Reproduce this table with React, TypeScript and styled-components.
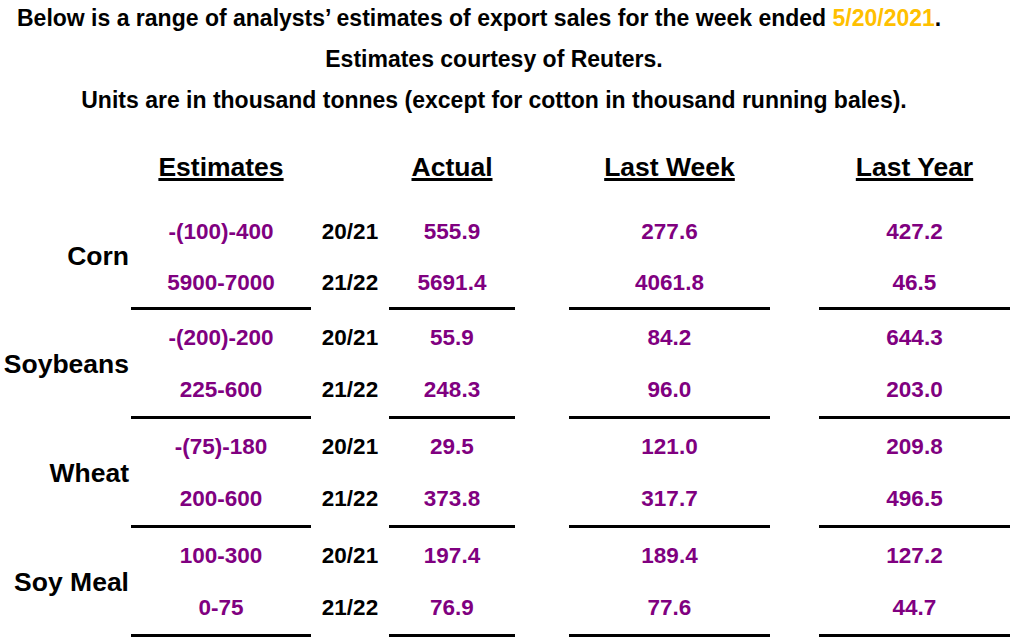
import React from "react";
import styled, { createGlobalStyle } from "styled-components";

const GlobalStyle = createGlobalStyle`
  html, body {
    margin: 0;
    padding: 0;
    background: #ffffff;
  }
  body {
    font-family: "Liberation Sans", Arial, sans-serif;
    font-weight: 700;
    color: #000000;
  }
`;

const COLS = "131px 180px 78px 126px 54px 201px 49px 191px";

type Group = {
  name: string;
  rows: { est: string; year: string; actual: string; week: string; year2: string }[];
};

const groups: Group[] = [
  {
    name: "Corn",
    rows: [
      { est: "-(100)-400", year: "20/21", actual: "555.9", week: "277.6", year2: "427.2" },
      { est: "5900-7000", year: "21/22", actual: "5691.4", week: "4061.8", year2: "46.5" },
    ],
  },
  {
    name: "Soybeans",
    rows: [
      { est: "-(200)-200", year: "20/21", actual: "55.9", week: "84.2", year2: "644.3" },
      { est: "225-600", year: "21/22", actual: "248.3", week: "96.0", year2: "203.0" },
    ],
  },
  {
    name: "Wheat",
    rows: [
      { est: "-(75)-180", year: "20/21", actual: "29.5", week: "121.0", year2: "209.8" },
      { est: "200-600", year: "21/22", actual: "373.8", week: "317.7", year2: "496.5" },
    ],
  },
  {
    name: "Soy Meal",
    rows: [
      { est: "100-300", year: "20/21", actual: "197.4", week: "189.4", year2: "127.2" },
      { est: "0-75", year: "21/22", actual: "76.9", week: "77.6", year2: "44.7" },
    ],
  },
];

const Page = styled.div`
  width: 1019px;
  height: 639px;
  overflow: hidden;
`;

const Intro = styled.div`
  width: 988px;
  margin-top: -2px;
  font-size: 23px;
`;

const IntroLine = styled.div<{ $left?: boolean }>`
  height: 40px;
  line-height: 40px;
  white-space: nowrap;
  text-align: ${(p) => (p.$left ? "left" : "center")};
  padding-left: ${(p) => (p.$left ? "17px" : "0")};

  & + & {
    margin-top: 1px;
  }
`;

const DateText = styled.span`
  color: #ffc000;
`;

const HeaderRow = styled.div`
  display: grid;
  grid-template-columns: ${COLS};
  height: 40px;
  margin-top: 27px;
  margin-bottom: 14px;
  align-items: center;
`;

const Heading = styled.div<{ $col: number }>`
  grid-column: ${(p) => p.$col};
  text-align: center;
  font-size: 26.5px;
  line-height: 40px;
  white-space: nowrap;

  span {
    text-decoration: underline;
    text-decoration-thickness: 3px;
    text-underline-offset: 2px;
  }
`;

const GroupGrid = styled.div<{ $first?: boolean }>`
  display: grid;
  grid-template-columns: ${COLS};
  grid-template-rows: ${(p) => (p.$first ? "52px 49px 3px" : "52px 52px 3px")};
  padding-top: ${(p) => (p.$first ? "5px" : "2px")};
`;

const Name = styled.div`
  grid-column: 1;
  grid-row: 1 / span 2;
  align-self: center;
  text-align: right;
  padding-right: 2px;
  font-size: 26.5px;
  white-space: nowrap;
`;

const Cell = styled.div<{ $col: number; $row: number; $dark?: boolean }>`
  grid-column: ${(p) => p.$col};
  grid-row: ${(p) => p.$row};
  display: flex;
  align-items: center;
  justify-content: center;
  font-size: 22.5px;
  white-space: nowrap;
  color: ${(p) => (p.$dark ? "#000000" : "#800080")};
`;

const Rule = styled.div<{ $col: number }>`
  grid-column: ${(p) => p.$col};
  grid-row: 3;
  background: #000000;
`;

const App: React.FC = () => {
  return (
    <Page>
      <GlobalStyle />
      <Intro>
        <IntroLine $left>
          Below is a range of analysts’ estimates of export sales for the week ended{" "}
          <DateText>5/20/2021</DateText>.
        </IntroLine>
        <IntroLine>Estimates courtesy of Reuters.</IntroLine>
        <IntroLine>
          Units are in thousand tonnes (except for cotton in thousand running bales).
        </IntroLine>
      </Intro>

      <HeaderRow>
        <Heading $col={2}>
          <span>Estimates</span>
        </Heading>
        <Heading $col={4}>
          <span>Actual</span>
        </Heading>
        <Heading $col={6}>
          <span>Last Week</span>
        </Heading>
        <Heading $col={8}>
          <span>Last Year</span>
        </Heading>
      </HeaderRow>

      {groups.map((g, gi) => (
        <GroupGrid key={g.name} $first={gi === 0}>
          <Name>{g.name}</Name>
          {g.rows.map((r, i) => (
            <React.Fragment key={r.year}>
              <Cell $col={2} $row={i + 1}>{r.est}</Cell>
              <Cell $col={3} $row={i + 1} $dark>{r.year}</Cell>
              <Cell $col={4} $row={i + 1}>{r.actual}</Cell>
              <Cell $col={6} $row={i + 1}>{r.week}</Cell>
              <Cell $col={8} $row={i + 1}>{r.year2}</Cell>
            </React.Fragment>
          ))}
          <Rule $col={2} />
          <Rule $col={4} />
          <Rule $col={6} />
          <Rule $col={8} />
        </GroupGrid>
      ))}
    </Page>
  );
};

export default App;
